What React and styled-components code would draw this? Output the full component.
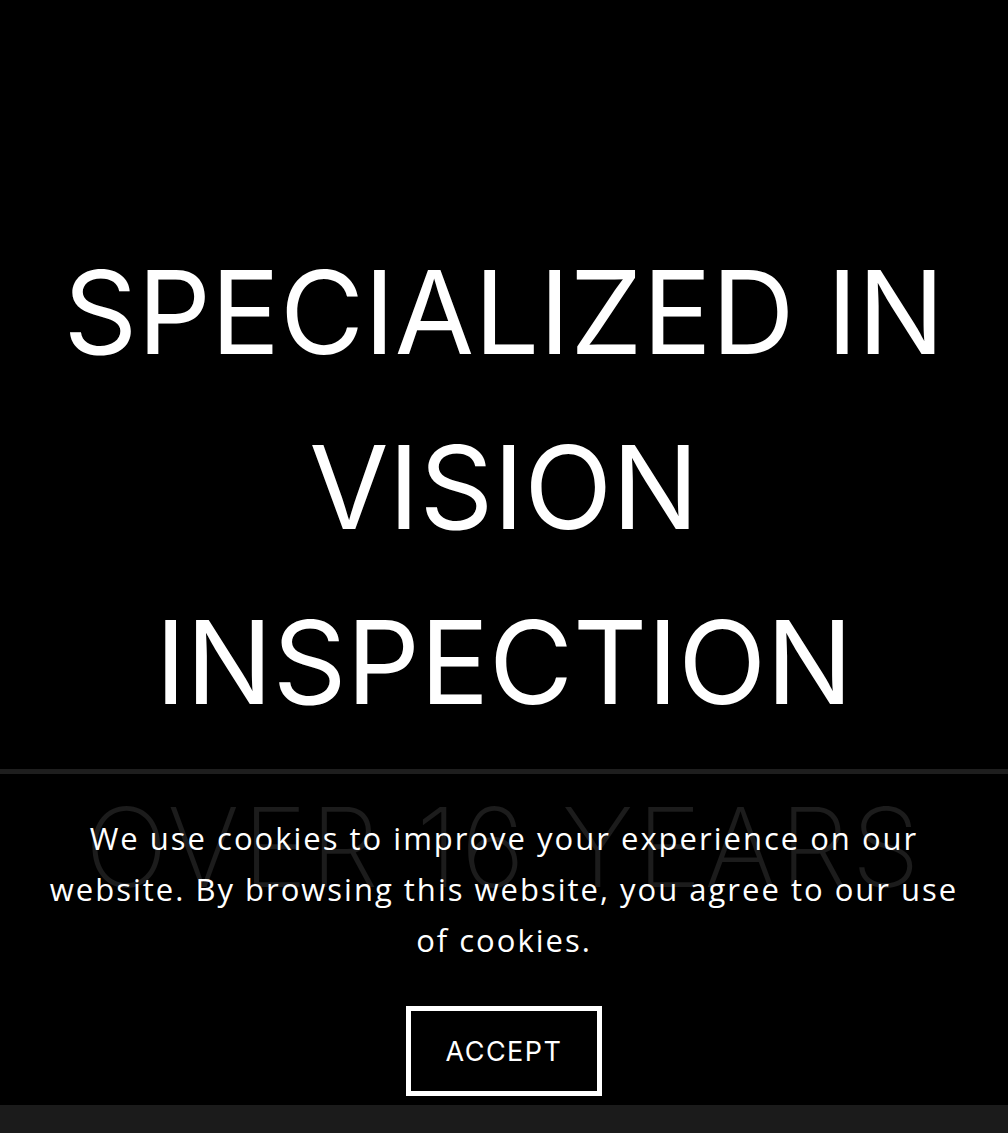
import styled, { createGlobalStyle } from "styled-components";

const Global = createGlobalStyle`
  html, body {
    margin: 0;
    padding: 0;
    background: #000;
  }
  body {
    font-family: "Inter", "Liberation Sans", sans-serif;
    color: #fff;
  }
`;

const Page = styled.div`
  display: flex;
  flex-direction: column;
  min-height: 1133px;
  background: #000;
`;

const Hero = styled.section`
  height: 769px;
  display: flex;
  justify-content: center;
  padding-top: 225px;
  box-sizing: border-box;
`;

const Headline = styled.h1`
  margin: 0;
  font-family: "Inter", "Liberation Sans", sans-serif;
  font-weight: 400;
  font-size: 115px;
  line-height: 175px;
  letter-spacing: 0;
  text-align: center;
  color: #fff;
`;

const Divider = styled.hr`
  margin: 0;
  border: none;
  height: 5px;
  background: #1e1e1e;
`;

const Stage = styled.section`
  position: relative;
  height: 331px;
  overflow: hidden;
`;

const Years = styled.h2`
  margin: 0;
  padding-top: 8px;
  font-family: "Inter", "Liberation Sans", sans-serif;
  font-weight: 200;
  font-size: 110px;
  line-height: 130px;
  letter-spacing: 3px;
  text-align: center;
  color: #1c1c1c;
`;

const Cookie = styled.div`
  position: absolute;
  inset: 0;
  display: flex;
  flex-direction: column;
  align-items: center;
  padding: 39px 40px 0;
  box-sizing: border-box;
`;

const CookieText = styled.p`
  margin: 0;
  max-width: 922px;
  font-family: "Open Sans", "Liberation Sans", sans-serif;
  font-size: 31px;
  line-height: 51px;
  letter-spacing: 2px;
  text-align: center;
  color: #fff;
`;

const AcceptButton = styled.button`
  margin-top: 40px;
  width: 196px;
  height: 90px;
  background: #000;
  border: 5px solid #fff;
  color: #fff;
  font-family: "Inter", "Liberation Sans", sans-serif;
  font-size: 27px;
  letter-spacing: 1.5px;
  cursor: pointer;
`;

const Footer = styled.footer`
  height: 28px;
  background: #1b1b1b;
`;

export default function App() {
  return (
    <>
      <Global />
      <Page>
        <Hero>
          <Headline>
            SPECIALIZED IN
            <br />
            VISION
            <br />
            INSPECTION
          </Headline>
        </Hero>
        <Divider />
        <Stage>
          <Years>OVER 16 YEARS</Years>
          <Cookie>
            <CookieText>
              We use cookies to improve your experience on our website. By
              browsing this website, you agree to our use of cookies.
            </CookieText>
            <AcceptButton>ACCEPT</AcceptButton>
          </Cookie>
        </Stage>
        <Footer />
      </Page>
    </>
  );
}
